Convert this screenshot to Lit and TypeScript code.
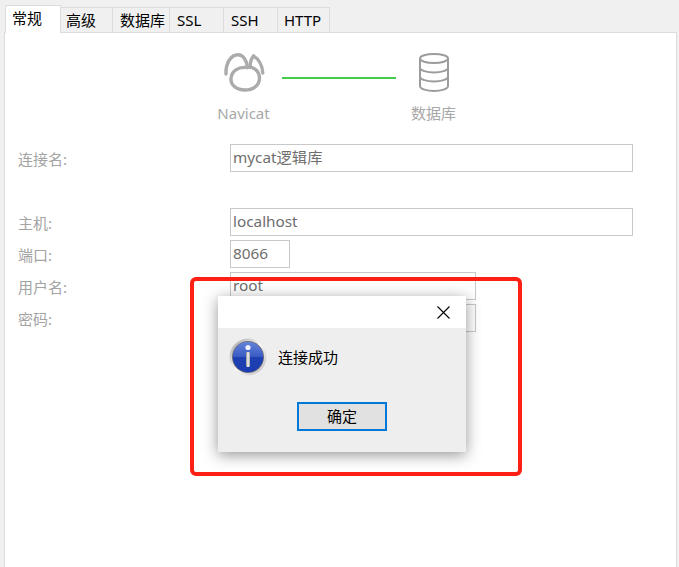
import { LitElement, html, css } from "lit";
import { customElement } from "lit/decorators.js";

@customElement("app-root")
export class AppRoot extends LitElement {
  static styles = css`
    :host { display: block; position: relative; width: 679px; height: 567px; overflow: hidden; background: #f0f0f0; font-family: "Noto Sans", "Noto Sans CJK SC", sans-serif; }
    .tabs { display: flex; align-items: flex-end; height: 33px; padding: 5px 0 0 5px; box-sizing: border-box; position: relative; z-index: 1; }
    .tab { height: 25px; margin-bottom: 1px; box-sizing: border-box; border: 1px solid #dcdcdc; border-left: none; border-bottom: none; font-size: 15px; line-height: 24px; color: #000; background: #f0f0f0; }
    .tab.active { height: 28px; margin-bottom: 0; line-height: 25px; background: #fff; border-left: 1px solid #dcdcdc; }
    .panel { margin: -1px 2px 0 4px; height: 540px; box-sizing: border-box; background: #fff; border: 1px solid #dcdcdc; border-bottom: none; }
    .steps { display: flex; justify-content: center; align-items: flex-start; padding: 19px 4px 0 0; height: 111px; box-sizing: border-box; }
    .step { width: 60px; display: flex; flex-direction: column; align-items: center; gap: 9px; font-size: 15px; line-height: 20px; color: #a8a8a8; }
    .step svg { display: block; }
    .link { width: 114px; height: 2px; margin: 25px 8px 0; background: #44cc4c; }
    .form { display: grid; grid-template-columns: 212px 1fr; row-gap: 4px; padding-left: 13px; }
    .label { font-size: 15px; line-height: 28px; padding-top: 1px; height: 28px; box-sizing: border-box; color: #a3a3a3; }
    .field { height: 28px; box-sizing: border-box; border: 1px solid #c8c8c8; padding-left: 2px; font-size: 15.3px; line-height: 24px; color: #6e6e6e; background: #fff; }
    .wide { width: 403px; }
    .mid { width: 246px; }
    .short { width: 60px; }
    .spacer { grid-column: 1 / 3; height: 28px; }
    .dialog { position: absolute; left: 218px; top: 296px; width: 248px; height: 156px; background: #eeeeee; box-shadow: 0 3px 14px rgba(0,0,0,0.42); display: flex; flex-direction: column; }
    .title { height: 32px; background: #fff; display: flex; justify-content: flex-end; align-items: center; padding-right: 16px; }
    .msg { display: flex; align-items: center; gap: 11px; padding: 10px 0 0 11px; font-size: 15px; line-height: 20px; color: #000; }
    .actions { display: flex; justify-content: center; margin-top: 26px; }
    .btn { width: 90px; height: 29px; box-sizing: border-box; border: 2px solid #0078d7; background: #e1e1e1; font-size: 15px; line-height: 25px; text-align: center; color: #000; }
    .mark { position: absolute; left: 189.500px; top: 276.500px; width: 332.500px; height: 199px; box-sizing: border-box; border: 4px solid #ff2015; border-radius: 6px; pointer-events: none; }
  `;

  render() {
    const tabs: [string, number, number][] = [["常规", 56, 6], ["高级", 52, 5], ["数据库", 57, 7], ["SSL", 54, 7], ["SSH", 54, 7], ["HTTP", 52, 6]];
    return html`
      <div class="tabs">
        ${tabs.map(([t, w, p], i) => html`<div class="tab ${i === 0 ? "active" : ""}" style="width:${w}px;padding-left:${p}px">${t}</div>`)}
      </div>
      <div class="panel">
        <div class="steps">
          <div class="step">
            <svg width="48" height="42" viewBox="220 52 48 42" fill="none" stroke="#ababab" stroke-width="3.4" stroke-linecap="round">
              <path d="M247 67.500 C238 66.500 231.500 71 231 78.500 C230.500 85.500 237 90 245 90 C253 90 259.500 85.500 259.500 78 C259.500 73.500 256.500 69.500 252 67.500"></path>
              <path d="M226 74 C225.500 63 231 54.800 238 54.800 C243 54.800 246.500 60 247.500 67.500"></path>
              <path d="M250 67.500 C250 63 251 59 253.500 56 C258.500 59 262.500 65.500 262.800 73"></path>
            </svg>
            <span>Navicat</span>
          </div>
          <div class="link"></div>
          <div class="step">
            <svg width="32" height="42" viewBox="418 52 32 42" fill="none" stroke="#9c9c9c" stroke-width="2">
              <ellipse cx="434" cy="58.500" rx="14" ry="4.500"></ellipse>
              <path d="M420 58.500 V86 C420 89 427 91 434 91 C441 91 448 89 448 86 V58.500"></path>
              <path d="M420 67.500 C420 70.500 427 72.500 434 72.500 C441 72.500 448 70.500 448 67.500"></path>
              <path d="M420 76.500 C420 79.500 427 81.500 434 81.500 C441 81.500 448 79.500 448 76.500"></path>
            </svg>
            <span>数据库</span>
          </div>
        </div>
        <div class="form">
          <div class="label">连接名:</div><div class="field wide">mycat逻辑库</div>
          <div class="spacer"></div>
          <div class="label">主机:</div><div class="field wide">localhost</div>
          <div class="label">端口:</div><div class="field short">8066</div>
          <div class="label">用户名:</div><div class="field mid">root</div>
          <div class="label">密码:</div><div class="field mid"></div>
        </div>
      </div>
      <div class="dialog">
        <div class="title">
          <svg width="13" height="13" viewBox="0 0 13 13" stroke="#000" stroke-width="1.100" fill="none"><path d="M0.500 0.500 L12.500 12.500 M12.500 0.500 L0.500 12.500"></path></svg>
        </div>
        <div class="msg">
          <svg width="38" height="38" viewBox="0 0 38 38">
            <defs>
              <linearGradient id="rim" x1="0" y1="0" x2="1" y2="1"><stop offset="0" stop-color="#a0a0a0"></stop><stop offset="0.5" stop-color="#f8f8f8"></stop><stop offset="1" stop-color="#b8b8b8"></stop></linearGradient>
              <linearGradient id="blue" x1="0" y1="0" x2="0" y2="1"><stop offset="0" stop-color="#6483d8"></stop><stop offset="0.48" stop-color="#3a5cc4"></stop><stop offset="0.52" stop-color="#1d3fb0"></stop><stop offset="1" stop-color="#1a3db4"></stop></linearGradient>
              <linearGradient id="stem" x1="0" y1="0" x2="1" y2="0"><stop offset="0" stop-color="#8e8e8e"></stop><stop offset="0.5" stop-color="#f6f6f6"></stop><stop offset="1" stop-color="#a0a0a0"></stop></linearGradient>
            </defs>
            <circle cx="19" cy="19" r="18.500" fill="url(#rim)"></circle>
            <circle cx="19" cy="19" r="16" fill="#6f6f78"></circle>
            <circle cx="19" cy="19" r="15.200" fill="url(#blue)"></circle>
            <circle cx="19" cy="9.500" r="2.600" fill="#eef2ff"></circle>
            <rect x="17" y="14" width="4" height="15" rx="1.200" fill="url(#stem)"></rect>
          </svg>
          <span>连接成功</span>
        </div>
        <div class="actions"><div class="btn">确定</div></div>
      </div>
      <div class="mark"></div>
    `;
  }
}
